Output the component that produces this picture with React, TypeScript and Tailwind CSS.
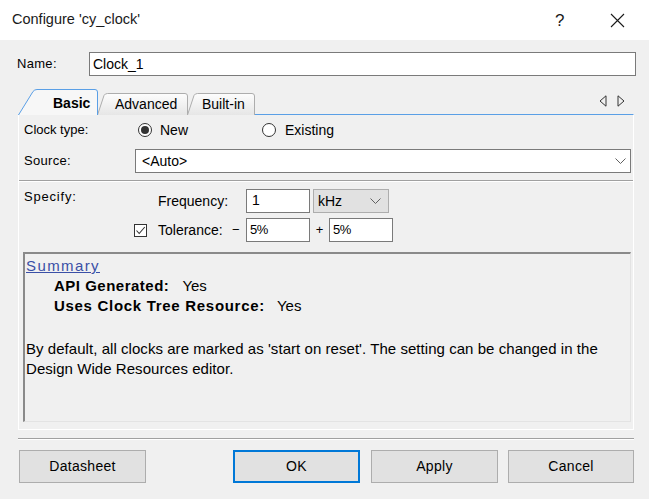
import React from "react";

function Chevron() {
  return (
    <svg width="11" height="6" viewBox="0 0 11 6" className="shrink-0">
      <path d="M0.5 0.5 L5.5 5.5 L10.5 0.5" fill="none" stroke="#606060" strokeWidth="1" />
    </svg>
  );
}

function Radio({ checked }: { checked?: boolean }) {
  return (
    <div className="w-[14px] h-[14px] rounded-full border border-[#333333] bg-white flex items-center justify-center shrink-0">
      {checked && <div className="w-[8px] h-[8px] rounded-full bg-[#333333]" />}
    </div>
  );
}

function Btn({ label, primary, w }: { label: string; primary?: boolean; w: string }) {
  return (
    <div
      className={`${w} h-[33px] bg-[#e1e1e1] flex items-center justify-center text-[14px] tracking-[0.3px] ${
        primary ? "border-2 border-[#0078d7]" : "border border-[#adadad]"
      }`}
    >
      {label}
    </div>
  );
}

export default function App() {
  return (
    <div className="w-[649px] h-[499px] bg-[#f0f0f0] flex flex-col text-black overflow-hidden font-['Liberation_Sans','Noto_Sans',sans-serif]">
      {/* Title bar */}
      <div className="h-[40px] bg-white flex items-center shrink-0">
        <span className="ml-[12px] text-[14.5px] text-[#1a1a1a]">Configure 'cy_clock'</span>
        <span className="ml-auto w-[10px] text-[17px] text-[#1a1a1a] leading-none">?</span>
        <svg width="15" height="15" viewBox="0 0 15 15" className="ml-[45px] mr-[24px]">
          <path d="M1 1 L14 14 M14 1 L1 14" stroke="#1a1a1a" strokeWidth="1.1" />
        </svg>
      </div>

      {/* Name row */}
      <div className="mt-[12px] ml-[17px] mr-[13px] flex items-center">
        <span className="w-[72px] text-[13px] tracking-[0.3px]">Name:</span>
        <div className="flex-1 h-[24px] bg-white border border-[#7a7a7a] flex items-center px-[3px] text-[14px]">
          Clock_1
        </div>
      </div>

      {/* Tabs */}
      <div className="mt-[13px] ml-[18px] mr-[15px] h-[25px] flex items-end">
        <div className="relative w-[80px] h-[25px] z-10 flex items-center">
          <svg width="80" height="26" viewBox="0 0 80 26" className="absolute left-0 top-0">
            <path d="M0.5 26 L15 2.5 Q16.5 0.5 19 0.5 L77 0.5 Q79.5 0.5 79.5 3 L79.5 26" fill="#f7f7f7" stroke="#5a9fe6" strokeWidth="1" />
          </svg>
          <span className="relative ml-[35px] text-[14px] font-bold mt-[3px]">Basic</span>
        </div>
        <div className="relative w-[90px] h-[21px] -ml-[1px] flex items-center">
          <svg width="91" height="22" viewBox="0 0 91 22" className="absolute left-0 top-0">
            <defs>
              <linearGradient id="tg" x1="0" y1="0" x2="0" y2="1">
                <stop offset="0" stopColor="#fdfdfd" />
                <stop offset="1" stopColor="#e6e6e6" />
              </linearGradient>
            </defs>
            <path d="M0.5 22 L7 2.5 Q8 0.5 10.5 0.5 L88 0.5 Q90.5 0.5 90.5 3 L90.5 22" fill="url(#tg)" stroke="#adadad" strokeWidth="1" />
          </svg>
          <span className="relative ml-[18px] text-[14px] mt-[2px]">Advanced</span>
        </div>
        <div className="relative w-[68px] h-[21px] flex items-center">
          <svg width="69" height="22" viewBox="0 0 69 22" className="absolute left-0 top-0">
            <defs>
              <linearGradient id="tg2" x1="0" y1="0" x2="0" y2="1">
                <stop offset="0" stopColor="#fdfdfd" />
                <stop offset="1" stopColor="#e6e6e6" />
              </linearGradient>
            </defs>
            <path d="M0.5 22 L7 2.5 Q8 0.5 10.5 0.5 L65 0.5 Q67.5 0.5 67.5 3 L67.5 22" fill="url(#tg2)" stroke="#adadad" strokeWidth="1" />
          </svg>
          <span className="relative ml-[15px] text-[14px] mt-[2px]">Built-in</span>
        </div>
        <div className="ml-auto self-stretch flex items-center gap-[10px] pb-[2px] mr-[9px]">
          <svg width="8" height="12" viewBox="0 0 8 12">
            <path d="M7 0.8 L7 11.2 L1 6 Z" fill="none" stroke="#333" strokeWidth="1" strokeLinejoin="round" />
          </svg>
          <svg width="8" height="12" viewBox="0 0 8 12">
            <path d="M1 0.8 L1 11.2 L7 6 Z" fill="none" stroke="#333" strokeWidth="1" strokeLinejoin="round" />
          </svg>
        </div>
      </div>

      {/* Tab panel */}
      <div className="ml-[18px] w-[616px] h-[316px] border-t border-t-[#5a9fe6] border-l border-r border-b border-l-white border-r-white border-b-white flex flex-col shrink-0">
        {/* Clock type */}
        <div className="mt-[5px] h-[20px] flex items-center text-[13px]">
          <span className="pl-[5px] w-[119px]">Clock type:</span>
          <div className="w-[124px] flex items-center">
            <Radio checked />
            <span className="ml-[8px] text-[14px]">New</span>
          </div>
          <div className="flex items-center">
            <Radio />
            <span className="ml-[9px] text-[14px]">Existing</span>
          </div>
        </div>

        {/* Source */}
        <div className="mt-[9px] h-[24px] flex items-center text-[13px] mr-[2px]">
          <span className="pl-[5px] w-[116px] tracking-[0.3px]">Source:</span>
          <div className="flex-1 h-[24px] bg-white border border-[#7a7a7a] flex items-center pl-[6px] pr-[4px] text-[14px]">
            <span className="flex-1">&lt;Auto&gt;</span>
            <Chevron />
          </div>
        </div>

        {/* Separator */}
        <div className="mt-[7px] h-[2px] border-t border-t-[#a0a0a0] border-b border-b-white" />

        {/* Specify */}
        <div className="mt-[7px] flex text-[13px]">
          <div className="w-[115px] pl-[5px] leading-[16px] tracking-[0.8px]">Specify:</div>
          <div className="flex flex-col gap-[5px]">
            <div className="h-[24px] flex items-center">
              <span className="ml-[24px] w-[88px] text-[14px]">Frequency:</span>
              <div className="w-[64px] h-[24px] bg-white border border-[#7a7a7a] flex items-end pb-[1px] pl-[5px] text-[14px]">1</div>
              <div className="ml-[3px] w-[76px] h-[24px] bg-[#e1e1e1] border border-[#adadad] flex items-center pl-[4px] pr-[7px] text-[14px]">
                <span className="flex-1">kHz</span>
                <Chevron />
              </div>
            </div>
            <div className="h-[24px] flex items-center">
              <div className="w-[13px] h-[13px] border border-[#333333] bg-white flex items-center justify-center">
                <svg width="11" height="11" viewBox="0 0 11 11">
                  <path d="M1.5 5.5 L4.2 8.5 L9.8 2" fill="none" stroke="#333" strokeWidth="1.1" />
                </svg>
              </div>
              <span className="ml-[11px] w-[74px] text-[14px]">Tolerance:</span>
              <span className="w-[14px]">−</span>
              <div className="w-[64px] h-[24px] bg-white border border-[#7a7a7a] flex items-center pl-[3px] text-[13px] tracking-[-0.5px]">5%</div>
              <span className="w-[19px] text-center">+</span>
              <div className="w-[64px] h-[24px] bg-white border border-[#7a7a7a] flex items-center pl-[3px] text-[13px] tracking-[-0.5px]">5%</div>
            </div>
          </div>
        </div>

        {/* Summary */}
        <div className="mt-[10px] ml-[4px] mr-[2px] h-[170px] border-t-2 border-l-2 border-t-[#8a8a8a] border-l-[#8a8a8a] border-r border-b border-r-[#e3e3e3] border-b-[#e3e3e3] pt-[2px] pl-[1px] text-[15px] leading-[20px]">
          <div className="text-[#3a4fa6] underline tracking-[1.4px]">Summary</div>
          <div className="pl-[28px]">
            <span className="font-bold tracking-[0.5px]">API Generated:</span>
            <span className="ml-[13px]">Yes</span>
          </div>
          <div className="pl-[28px]">
            <span className="font-bold tracking-[0.7px]">Uses Clock Tree Resource:</span>
            <span className="ml-[12px]">Yes</span>
          </div>
          <div className="mt-[23px] tracking-[0.05px]">
            By default, all clocks are marked as 'start on reset'. The setting can be changed in the
            <br />
            Design Wide Resources editor.
          </div>
        </div>
      </div>

      {/* Bottom separator */}
      <div className="mt-[8px] ml-[18px] w-[616px] h-[2px] border-t border-t-[#a0a0a0] border-b border-b-white" />

      {/* Buttons */}
      <div className="mt-[10px] ml-[19px] flex">
        <Btn label="Datasheet" w="w-[127px]" />
        <div className="ml-[87px]">
          <Btn label="OK" primary w="w-[127px]" />
        </div>
        <div className="ml-[11px]">
          <Btn label="Apply" w="w-[127px]" />
        </div>
        <div className="ml-[10px]">
          <Btn label="Cancel" w="w-[126px]" />
        </div>
      </div>
    </div>
  );
}
